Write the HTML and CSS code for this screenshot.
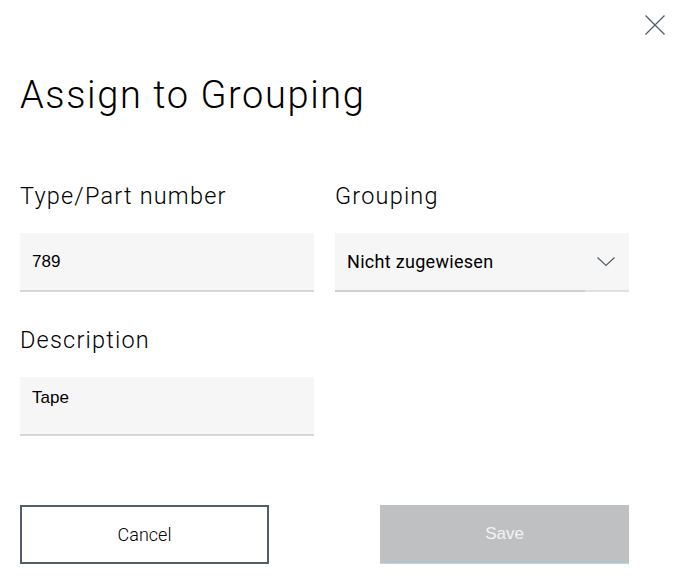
FILE: index.html
```html
<!DOCTYPE html>
<html lang="en">
<head>
<meta charset="utf-8">
<title>Assign to Grouping</title>
<link rel="stylesheet" href="styles.css">
</head>
<body>
<div class="dialog">
  <div class="topbar">
    <button class="close" aria-label="Close">
      <svg width="20" height="20" viewBox="0 0 20 20"><path d="M0.5 0.5 L19.5 19.5 M19.5 0.5 L0.5 19.5" stroke="#525f6b" stroke-width="1.3" fill="none"/></svg>
    </button>
  </div>
  <h1 class="title">Assign to Grouping</h1>
  <div class="fields">
    <div class="field">
      <label class="label">Type/Part number</label>
      <div class="input">789</div>
    </div>
    <div class="field">
      <label class="label">Grouping</label>
      <div class="input select">
        <span class="select-text">Nicht zugewiesen</span>
        <svg class="chev" width="18" height="10" viewBox="0 0 18 10"><path d="M0.5 0.5 L9 8.5 L17.5 0.5" stroke="#525f6b" stroke-width="1.2" fill="none"/></svg>
        <span class="select-line"></span>
      </div>
    </div>
    <div class="field">
      <label class="label">Description</label>
      <div class="input textarea">Tape</div>
    </div>
  </div>
  <div class="actions">
    <button class="btn btn-secondary">Cancel</button>
    <button class="btn btn-primary" disabled>Save</button>
  </div>
</div>
</body>
</html>
```
FILE: styles.css
```css
html, body {
  margin: 0;
  padding: 0;
  background: #ffffff;
}
body {
  font-family: "Roboto", "Liberation Sans", sans-serif;
  color: #000000;
}
.dialog {
  width: 676px;
  padding: 0 0 0 20px;
  box-sizing: border-box;
}
.topbar {
  display: flex;
  justify-content: flex-end;
  padding: 15px 11px 0 0;
  height: 20px;
}
.close {
  border: 0;
  background: none;
  padding: 0;
  width: 20px;
  height: 20px;
  display: block;
}
.close svg { display: block; }
.title {
  margin: 38px 0 0 0;
  font-family: "Roboto", sans-serif;
  font-weight: 300;
  font-size: 38px;
  line-height: 44px;
  color: #000;
  letter-spacing: 1.6px;
}
.fields {
  display: grid;
  grid-template-columns: 294px 294px;
  column-gap: 21px;
  row-gap: 0;
  margin-top: 65px;
}
.field {
  display: flex;
  flex-direction: column;
  margin-bottom: 34px;
}
.label {
  font-family: "Roboto", sans-serif;
  font-weight: 300;
  font-size: 23.5px;
  line-height: 28px;
  color: #000;
  margin-bottom: 23px;
  letter-spacing: 1.2px;
}
.input {
  height: 57px;
  background: #f6f6f6;
  border-bottom: 2px solid #d4d7da;
  display: flex;
  align-items: center;
  padding: 0 12px;
  font-family: "Liberation Sans", sans-serif;
  font-size: 17px;
  color: #000;
  position: relative;
}
.select {
  justify-content: space-between;
  border-bottom-color: #dfe2e5;
}
.select-text {
  font-family: "Roboto", sans-serif;
  font-size: 18px;
  letter-spacing: 0.3px;
}
.select-line {
  position: absolute;
  left: 0;
  bottom: -2px;
  width: 250px;
  height: 2px;
  background: #cbcfd3;
}
.chev {
  margin-right: 2px;
  margin-top: 1px;
}
.textarea {
  align-items: flex-start;
  padding-top: 11px;
  box-sizing: border-box;
  height: 59px;
}
.actions {
  display: flex;
  justify-content: space-between;
  width: 609px;
  margin-top: 35px;
}
.btn {
  width: 249px;
  height: 59px;
  box-sizing: border-box;
  font-size: 17px;
}
.btn-secondary {
  background: #fff;
  border: 2px solid #525f6b;
  color: #000;
  font-family: "Roboto", sans-serif;
  font-weight: 300;
  font-size: 18px;
}
.btn-primary {
  background: #bfc0c2;
  border: 0;
  border-bottom: 1px solid #b5d8ee;
  color: #f4f4f4;
  font-family: "Liberation Sans", sans-serif;
}
```
